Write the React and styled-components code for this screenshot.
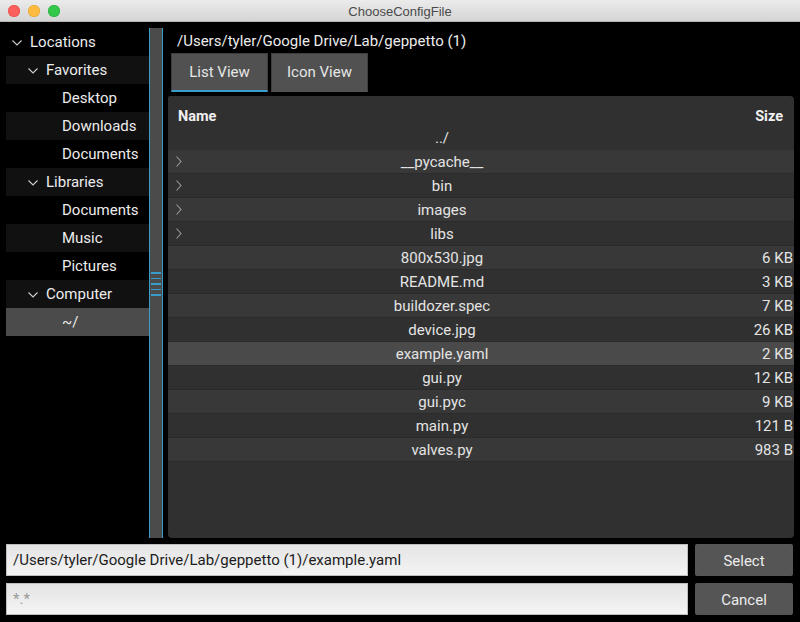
import React from "react";
import styled, { createGlobalStyle } from "styled-components";

const GlobalStyle = createGlobalStyle`
  html, body {
    margin: 0;
    padding: 0;
    background: #000;
  }
  body {
    font-family: Roboto, "Liberation Sans", sans-serif;
  }
`;

// sidebar tree entries (level = indent depth, open = has a down chevron)
const places = [
  { label: "Locations", level: 0, open: true },
  { label: "Favorites", level: 1, open: true },
  { label: "Desktop", level: 2 },
  { label: "Downloads", level: 2 },
  { label: "Documents", level: 2 },
  { label: "Libraries", level: 1, open: true },
  { label: "Documents", level: 2 },
  { label: "Music", level: 2 },
  { label: "Pictures", level: 2 },
  { label: "Computer", level: 1, open: true },
  { label: "~/", level: 2, selected: true },
];

const files = [
  { name: "__pycache__", dir: true },
  { name: "bin", dir: true },
  { name: "images", dir: true },
  { name: "libs", dir: true },
  { name: "800x530.jpg", size: "6 KB" },
  { name: "README.md", size: "3 KB" },
  { name: "buildozer.spec", size: "7 KB" },
  { name: "device.jpg", size: "26 KB" },
  { name: "example.yaml", size: "2 KB", selected: true },
  { name: "gui.py", size: "12 KB" },
  { name: "gui.pyc", size: "9 KB" },
  { name: "main.py", size: "121 B" },
  { name: "valves.py", size: "983 B" },
];

const DownChevron = () => (
  <svg width="10" height="6" viewBox="0 0 10 6">
    <polyline points="0.5,0.5 5,5 9.5,0.5" fill="none" stroke="#cfcfcf" strokeWidth="1.1" />
  </svg>
);

const RightChevron = () => (
  <svg width="6" height="11" viewBox="0 0 6 11">
    <polyline points="0.5,0.5 5,5.5 0.5,10.5" fill="none" stroke="#9a9a9a" strokeWidth="1.1" />
  </svg>
);

const App = () => {
  return (
    <Window>
      <GlobalStyle />
      <TitleBar>
        <Lights>
          <Light color="#fc605c" edge="#de4a45" />
          <Light color="#fdbc40" edge="#dea033" />
          <Light color="#34c84a" edge="#27a53a" />
        </Lights>
        <Title>ChooseConfigFile</Title>
      </TitleBar>

      <Body>
        <Top>
          <Sidebar>
            {places.map((p, i) => (
              <PlaceRow key={i} level={p.level} odd={i % 2 === 1} selected={p.selected}>
                <ChevronSlot>{p.open && <DownChevron />}</ChevronSlot>
                <span>{p.label}</span>
              </PlaceRow>
            ))}
          </Sidebar>

          <Splitter>
            <Grip>
              <GripLine />
              <GripLine />
              <GripLine />
              <GripLine />
              <GripLine />
            </Grip>
          </Splitter>

          <Browser>
            <PathLabel>/Users/tyler/Google Drive/Lab/geppetto (1)</PathLabel>
            <Tabs>
              <Tab active>List View</Tab>
              <Tab>Icon View</Tab>
            </Tabs>
            <FilePanel>
              <HeaderRow>
                <HeaderName>Name</HeaderName>
                <HeaderSize>Size</HeaderSize>
              </HeaderRow>
              <FileRow plain>
                <Expander />
                <FileName>../</FileName>
                <FileSize />
              </FileRow>
              {files.map((f, i) => (
                <FileRow key={f.name} alt={i % 2 === 0} selected={f.selected}>
                  <Expander>{f.dir && <RightChevron />}</Expander>
                  <FileName>{f.name}</FileName>
                  <FileSize>{f.size}</FileSize>
                </FileRow>
              ))}
            </FilePanel>
          </Browser>
        </Top>

        <Footer>
          <TextField>/Users/tyler/Google Drive/Lab/geppetto (1)/example.yaml</TextField>
          <ActionButton>Select</ActionButton>
          <TextField muted>*.*</TextField>
          <ActionButton>Cancel</ActionButton>
        </Footer>
      </Body>
    </Window>
  );
};

const Window = styled.div`
  width: 800px;
  height: 622px;
  display: flex;
  flex-direction: column;
  background: #000;
  overflow: hidden;
`;

const TitleBar = styled.div`
  height: 22px;
  flex-shrink: 0;
  display: flex;
  align-items: center;
  justify-content: center;
  position: relative;
  background: linear-gradient(#ebebeb, #d5d5d5);
  border-bottom: 1px solid #b4b4b4;
  box-sizing: border-box;
`;

const Lights = styled.div`
  position: absolute;
  left: 8px;
  top: 5px;
  display: flex;
  gap: 8px;
`;

const Light = styled.div`
  width: 12px;
  height: 12px;
  border-radius: 50%;
  background: ${(p) => p.color};
  box-shadow: inset 0 0 0 0.5px ${(p) => p.edge};
`;

const Title = styled.div`
  font-family: "Liberation Sans", Arial, sans-serif;
  font-size: 13px;
  color: #4a4a4a;
  padding-top: 1px;
`;

const Body = styled.div`
  flex: 1;
  display: flex;
  flex-direction: column;
  padding: 6px 6px 7px 6px;
  box-sizing: border-box;
`;

const Top = styled.div`
  height: 510px;
  display: flex;
`;

const Sidebar = styled.div`
  width: 143px;
  display: flex;
  flex-direction: column;
`;

const PlaceRow = styled.div`
  height: 28px;
  display: flex;
  align-items: center;
  gap: 8px;
  padding-left: ${(p) => 6 + p.level * 16}px;
  font-size: 15px;
  color: #ececec;
  background: ${(p) => (p.selected ? "#4b4b4b" : p.odd ? "#111111" : "#000")};
`;

const ChevronSlot = styled.div`
  width: 10px;
  display: flex;
  align-items: center;
  padding-top: 1px;
`;

const Splitter = styled.div`
  width: 12px;
  background: #4b4b4b;
  border-left: 1px solid #3a9cc8;
  border-right: 1px solid #3a9cc8;
  display: flex;
  flex-direction: column;
  justify-content: flex-start;
  padding-top: 244px;
`;

const Grip = styled.div`
  display: flex;
  flex-direction: column;
  gap: 4px;
  padding: 0 1px;
`;

const GripLine = styled.div`
  height: 1.5px;
  background: #3a9cc8;
`;

const Browser = styled.div`
  flex: 1;
  display: flex;
  flex-direction: column;
  padding-left: 5px;
`;

const PathLabel = styled.div`
  height: 25px;
  display: flex;
  align-items: center;
  padding-left: 9px;
  font-size: 15px;
  color: #ececec;
`;

const Tabs = styled.div`
  display: flex;
  gap: 3px;
  padding-left: 3px;
  margin-bottom: 4px;
`;

const Tab = styled.div`
  width: 97px;
  height: 39px;
  box-sizing: border-box;
  display: flex;
  align-items: center;
  justify-content: center;
  background: #515151;
  border: 1px solid #3e3e3e;
  border-bottom: 2px solid ${(p) => (p.active ? "#3a9cc8" : "#515151")};
  font-size: 15px;
  color: #e6e6e6;
`;

const FilePanel = styled.div`
  flex: 1;
  background: #303030;
  border-radius: 2px 4px 4px 4px;
  overflow: hidden;
  display: flex;
  flex-direction: column;
`;

const HeaderRow = styled.div`
  height: 30px;
  display: flex;
  justify-content: space-between;
  align-items: flex-end;
  padding: 0 11px 1px 10px;
  box-sizing: border-box;
  font-size: 14.5px;
  font-weight: 700;
  color: #f0f0f0;
`;

const HeaderName = styled.span``;
const HeaderSize = styled.span``;

const FileRow = styled.div`
  height: 24px;
  display: grid;
  grid-template-columns: 20px 508px 1fr;
  align-items: center;
  font-size: 15px;
  color: #e4e4e4;
  background: ${(p) =>
    p.selected ? "#4a4a4a" : p.plain ? "transparent" : p.alt ? "#383838" : "#303030"};
  border-bottom: 1px solid ${(p) => (p.plain ? "transparent" : "#2b2b2b")};
  box-sizing: border-box;
`;

const Expander = styled.div`
  display: flex;
  align-items: center;
  padding-left: 8px;
`;

const FileName = styled.div`
  text-align: center;
  white-space: nowrap;
`;

const FileSize = styled.div`
  text-align: right;
  padding-right: 1px;
  white-space: nowrap;
`;

const Footer = styled.div`
  margin-top: 6px;
  display: grid;
  grid-template-columns: 682px 98px;
  column-gap: 7px;
  row-gap: 7px;
`;

const TextField = styled.div`
  height: 32px;
  box-sizing: border-box;
  display: flex;
  align-items: center;
  padding-left: 6px;
  background: linear-gradient(#e4e4e4, #f4f4f4);
  border: 1px solid #bdbdbd;
  font-size: 15px;
  color: ${(p) => (p.muted ? "#9a9a9a" : "#1c1c1c")};
  white-space: nowrap;
  overflow: hidden;
`;

const ActionButton = styled.div`
  height: 32px;
  display: flex;
  align-items: center;
  justify-content: center;
  padding-top: 1px;
  box-sizing: border-box;
  background: #555555;
  border-radius: 2px;
  font-size: 15px;
  color: #ececec;
`;

export default App;
